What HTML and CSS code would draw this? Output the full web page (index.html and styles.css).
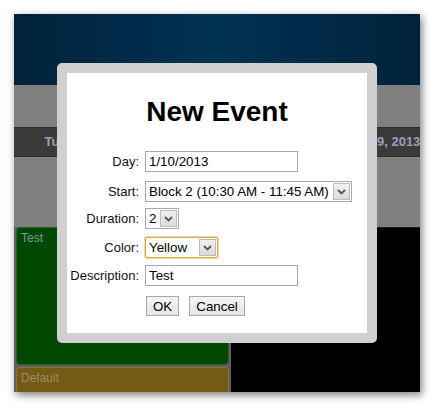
FILE: index.html
```html
<!DOCTYPE html>
<html lang="en">
<head>
    <meta charset="UTF-8">
    <meta name="viewport" content="width=device-width, initial-scale=1.0">
    <title>New Event</title>
    <link rel="stylesheet" href="styles.css">
</head>
<body>
    <div class="window">
        <div class="header"></div>
        <div class="band"></div>
        <div class="daybar">
            <div class="day first">Tuesday, January 08, 2013</div>
            <div class="day second">Wednesday, January 09, 2013</div>
        </div>
        <div class="band tall"></div>
        <div class="calendar">
            <div class="column">
                <div class="event green">Test</div>
                <div class="event yellow">Default</div>
            </div>
            <div class="column dark"></div>
        </div>

        <div class="modal">
            <div class="modal-body">
                <h2>New Event</h2>
                <form id="eventForm" class="event-form">
                    <label for="day">Day:</label>
                    <input type="text" id="day" value="1/10/2013">

                    <label for="start">Start:</label>
                    <div class="select start">
                        <select id="start">
                            <option>Block 1 (9:00 AM - 10:15 AM)</option>
                            <option selected>Block 2 (10:30 AM - 11:45 AM)</option>
                            <option>Block 3 (12:00 PM - 1:15 PM)</option>
                        </select>
                        <span class="arrow"><svg width="9" height="6" viewBox="0 0 9 6"><path d="M1 1 L4.5 4.5 L8 1" fill="none" stroke="#555" stroke-width="1.8"/></svg></span>
                    </div>

                    <label for="duration">Duration:</label>
                    <div class="select duration">
                        <select id="duration">
                            <option>1</option>
                            <option selected>2</option>
                            <option>3</option>
                        </select>
                        <span class="arrow"><svg width="9" height="6" viewBox="0 0 9 6"><path d="M1 1 L4.5 4.5 L8 1" fill="none" stroke="#555" stroke-width="1.8"/></svg></span>
                    </div>

                    <label for="color">Color:</label>
                    <div class="select color focused">
                        <select id="color">
                            <option>Default</option>
                            <option>Green</option>
                            <option selected>Yellow</option>
                        </select>
                        <span class="arrow"><svg width="9" height="6" viewBox="0 0 9 6"><path d="M1 1 L4.5 4.5 L8 1" fill="none" stroke="#555" stroke-width="1.8"/></svg></span>
                    </div>

                    <label for="description">Description:</label>
                    <input type="text" id="description" value="Test">

                    <div class="buttons">
                        <button type="submit" class="ok">OK</button>
                        <button type="button">Cancel</button>
                    </div>
                </form>
            </div>
        </div>
    </div>
</body>
</html>
```

FILE: styles.css
```css
body {
    margin: 0;
    background-color: #fff;
    font-family: "Liberation Sans", Arial, sans-serif;
}
.window {
    position: relative;
    margin: 14px;
    width: 406px;
    height: 378px;
    overflow: hidden;
    background-color: #808080;
    box-shadow: 2px 3px 8px rgba(0, 0, 0, 0.5);
}
.header {
    height: 71px;
    background: linear-gradient(to right, #00223b, #003252 50%, #00223b);
}
.band {
    height: 42px;
    background-color: #808080;
}
.band.tall {
    height: 70px;
}
.daybar {
    display: grid;
    grid-template-columns: 215px 1fr;
    height: 30px;
    background-color: #3a3a3a;
    border-top: 1px solid #2c2c2c;
    border-bottom: 1px solid #2c2c2c;
    box-sizing: border-box;
    overflow: hidden;
}
.day {
    color: #98a0b8;
    font-size: 13px;
    font-weight: bold;
    line-height: 28px;
    text-align: center;
    white-space: nowrap;
}
.day.first {
    padding-left: 8px;
}
.day.second {
    padding-left: 9px;
}
.calendar {
    display: grid;
    grid-template-columns: 217px 1fr;
    height: 165px;
    background-color: #606060;
}
.column {
    padding: 0 2px 0 2px;
}
.column.dark {
    padding: 0;
    background-color: #000;
    border-top: 1px solid #1a1a1a;
}
.event {
    box-sizing: border-box;
    border-radius: 4px;
    font-size: 12px;
    padding: 3px 4px;
}
.event.green {
    height: 138px;
    margin-bottom: 2px;
    background-color: #004700;
    border: 1px solid #2d5c2d;
    color: #7c9c9c;
}
.event.yellow {
    height: 40px;
    background-color: #745a13;
    border: 1px solid #8a7232;
    color: #9c8c6c;
}

/* dialog over the calendar */
.modal {
    position: absolute;
    left: 43px;
    top: 49px;
    width: 300px;
    height: 260px;
    border: 10px solid #d0d0d0;
    border-radius: 5px;
}
.modal-body {
    height: 100%;
    background-color: #fff;
}
.modal h2 {
    margin: 0;
    padding-top: 23px;
    font-size: 28px;
    line-height: 32px;
    text-align: center;
    color: #000;
}
.event-form {
    display: grid;
    grid-template-columns: 72px auto;
    grid-template-rows: 30px 27px 29px 28px 31px 21px;
    column-gap: 6px;
    align-items: start;
    justify-items: start;
    margin-top: 23px;
    font-size: 13px;
}
.event-form label {
    justify-self: end;
    line-height: 21px;
    color: #111;
}
.event-form input {
    box-sizing: border-box;
    width: 153px;
    height: 21px;
    margin: 0;
    padding: 0 3px;
    border: 1px solid #a9a9a9;
    font-family: inherit;
    font-size: 13.33px;
    color: #000;
}
.select {
    box-sizing: border-box;
    display: flex;
    height: 21px;
    border: 1px solid #a9a9a9;
    background-color: #fff;
}
.select select {
    flex: 1;
    min-width: 0;
    height: 100%;
    margin: 0;
    padding: 0 0 0 3px;
    border: none;
    outline: none;
    background: transparent;
    appearance: none;
    font-family: inherit;
    font-size: 13.33px;
    color: #000;
}
.select .arrow {
    display: flex;
    align-items: center;
    justify-content: center;
    width: 15px;
    margin: 1px;
    border: 1px solid #bcbcbc;
    background: linear-gradient(#f0f0f0, #dadada);
}
.select.start {
    width: 207px;
}
.select.duration {
    width: 34px;
}
.select.color {
    width: 73px;
}
.select.focused {
    border-color: #dba84a;
    box-shadow: 0 0 0 1px #f2d89a;
    border-radius: 2px;
}
.buttons {
    grid-column: 2;
    display: flex;
    gap: 10px;
    margin-left: 1px;
}
button {
    height: 20px;
    padding: 0 6px;
    border: 1px solid #a8a8a8;
    background: linear-gradient(#f6f6f6, #e4e4e4);
    font-family: inherit;
    font-size: 13.33px;
    color: #000;
    cursor: pointer;
}
button:hover {
    background: #e8e8e8;
}
```
